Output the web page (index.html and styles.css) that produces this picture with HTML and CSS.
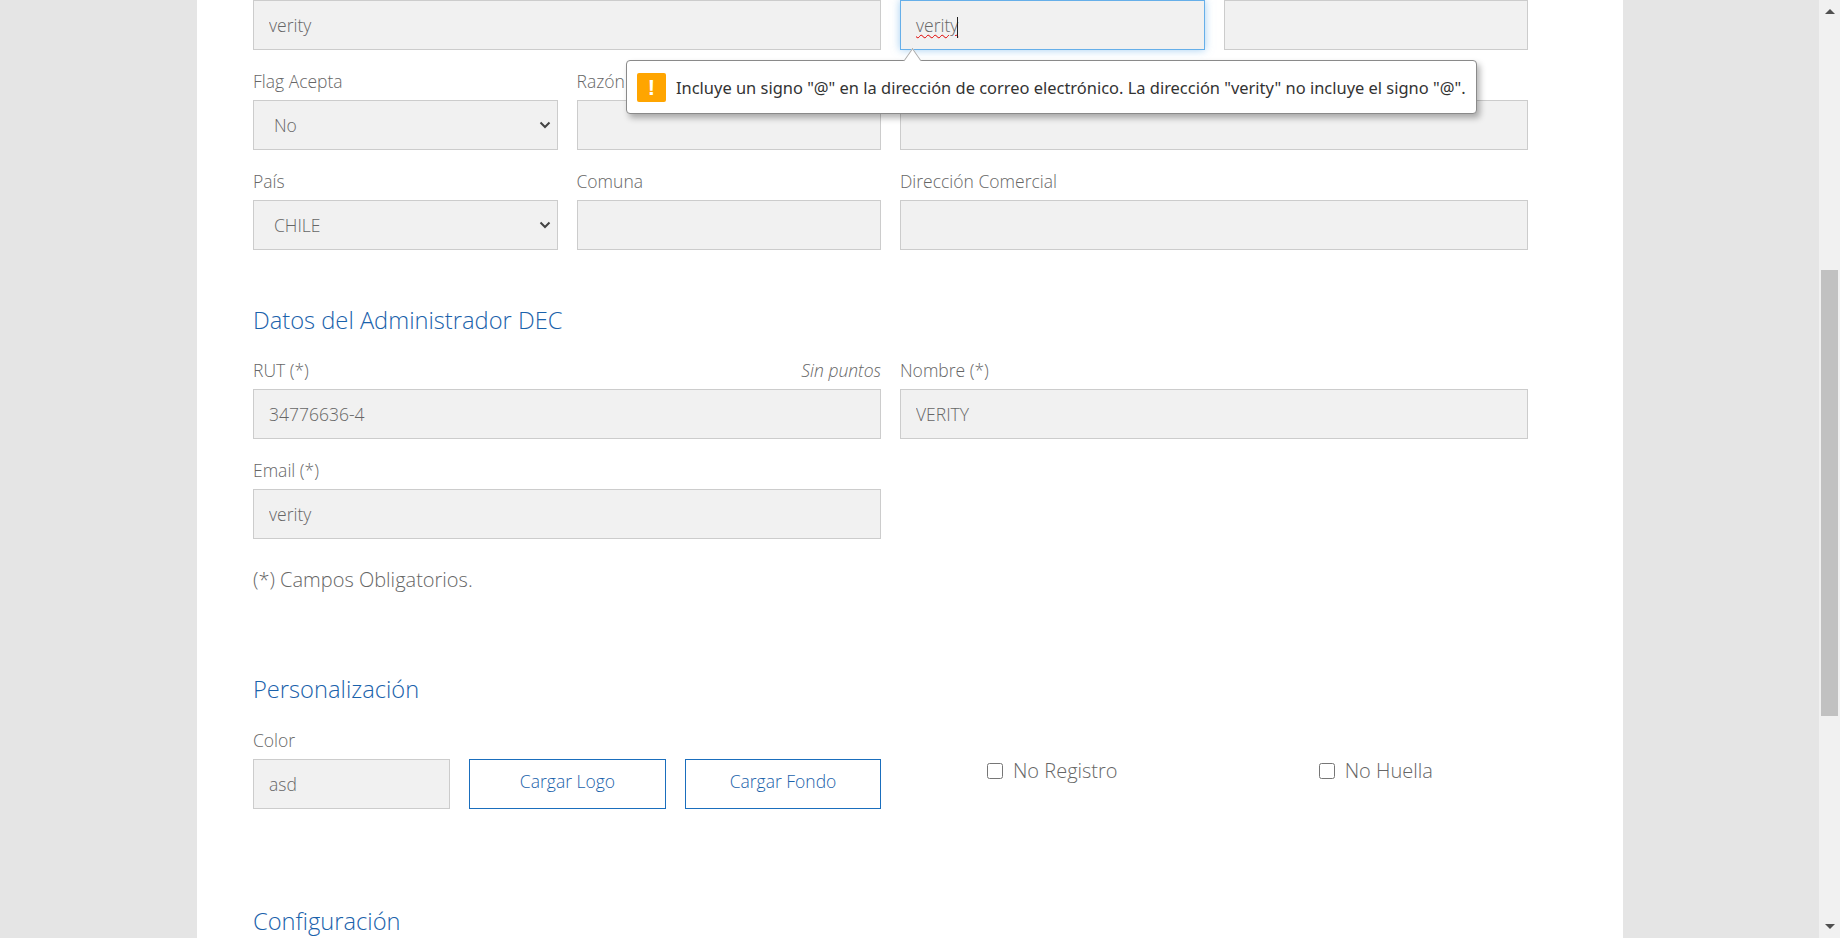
FILE: index.html
```html
<!DOCTYPE html>
<html lang="es">
<head>
    <meta charset="UTF-8">
    <meta name="viewport" content="width=device-width, initial-scale=1.0">
    <title>Datos de la empresa</title>
    <link rel="stylesheet" href="styles.css">
</head>
<body>
    <main class="sheet">
        <form class="form">
            <div class="row row-top">
                <div class="col-2"><input class="field" type="text" value="verity"></div>
                <div class="col-1">
                    <div class="field field-focus" role="textbox"><span class="misspelt">verity</span><span class="caret"></span></div>
                </div>
                <div class="col-1"><input class="field" type="text"></div>
            </div>

            <div class="row">
                <div class="col-1">
                    <label class="label">Flag Acepta</label>
                    <select class="field field-select"><option>No</option></select>
                </div>
                <div class="col-1">
                    <label class="label">Razón</label>
                    <input class="field" type="text">
                </div>
                <div class="col-2">
                    <label class="label"></label>
                    <input class="field" type="text">
                </div>
            </div>

            <div class="row">
                <div class="col-1">
                    <label class="label">País</label>
                    <select class="field field-select"><option>CHILE</option></select>
                </div>
                <div class="col-1">
                    <label class="label">Comuna</label>
                    <input class="field" type="text">
                </div>
                <div class="col-2">
                    <label class="label">Dirección Comercial</label>
                    <input class="field" type="text">
                </div>
            </div>

            <h2 class="section-title title-admin">Datos del Administrador DEC</h2>

            <div class="row">
                <div class="col-2">
                    <div class="label-line">
                        <label class="label">RUT (*)</label>
                        <em class="hint">Sin puntos</em>
                    </div>
                    <input class="field" type="text" value="34776636-4">
                </div>
                <div class="col-2">
                    <label class="label">Nombre (*)</label>
                    <input class="field" type="text" value="VERITY">
                </div>
            </div>

            <div class="row">
                <div class="col-2">
                    <label class="label">Email (*)</label>
                    <input class="field" type="text" value="verity">
                </div>
            </div>

            <p class="required-note">(*) Campos Obligatorios.</p>

            <h2 class="section-title title-custom">Personalización</h2>

            <div class="row">
                <div class="col-2 color-group">
                    <div>
                        <label class="label">Color</label>
                        <input class="field" type="text" value="asd">
                    </div>
                    <button class="upload-btn" type="button">Cargar Logo</button>
                    <button class="upload-btn" type="button">Cargar Fondo</button>
                </div>
                <div class="col-1 check-cell">
                    <label class="check"><input type="checkbox">No Registro</label>
                </div>
                <div class="col-1 check-cell">
                    <label class="check"><input type="checkbox">No Huella</label>
                </div>
            </div>

            <h2 class="section-title title-config">Configuración</h2>
        </form>

        <div class="bubble" role="alert">
            <span class="bubble-arrow"></span>
            <span class="bubble-icon">!</span>
            <span>Incluye un signo "@" en la dirección de correo electrónico. La dirección "verity" no incluye el signo "@".</span>
        </div>
    </main>

    <div class="scrollbar" aria-hidden="true">
        <span class="scroll-arrow arrow-up"></span>
        <div class="scroll-track"><div class="scroll-thumb"></div></div>
        <span class="scroll-arrow arrow-down"></span>
    </div>
</body>
</html>
```

FILE: styles.css
```css
* {
    box-sizing: border-box;
}

html, body {
    height: 100%;
}

body {
    margin: 0;
    display: flex;
    overflow: hidden;
    background-color: #e5e5e5;
    font-family: "Open Sans", sans-serif;
    font-weight: 300;
    font-size: 17.5px;
    color: #666;
}

.sheet {
    position: relative;
    flex: none;
    width: 1426px;
    height: 938px;
    margin-left: 197px;
    margin-right: 196px;
    padding: 0 95px 0 56px;
    background-color: #fff;
    overflow: hidden;
}

.row {
    display: grid;
    grid-template-columns: repeat(4, 1fr);
    column-gap: 19px;
    margin-top: 20px;
}

.row-top {
    margin-top: 0;
}

.col-1 {
    grid-column: span 1;
}

.col-2 {
    grid-column: span 2;
}

.label, .hint {
    display: block;
    height: 30px;
    line-height: 22px;
    font-size: 17.5px;
}

.label-line {
    display: flex;
    justify-content: space-between;
}

.field {
    display: block;
    width: 100%;
    height: 50px;
    padding: 0 15px;
    background-color: #f1f1f1;
    border: 1px solid #ccc;
    border-radius: 0;
    font-family: inherit;
    font-weight: 300;
    font-size: 17.5px;
    line-height: 48px;
    color: #666;
    outline: none;
}

.field-select {
    appearance: none;
    padding: 0 24px 0 20px;
    background-image: url("data:image/svg+xml,%3Csvg xmlns='http://www.w3.org/2000/svg' width='12' height='8' viewBox='0 0 12 8'%3E%3Cpath d='M1.5 1.5 6 6l4.5-4.5' fill='none' stroke='%23444' stroke-width='2'/%3E%3C/svg%3E");
    background-repeat: no-repeat;
    background-position: right 6px center;
}

.field-focus {
    border-color: #66afe9;
    box-shadow: 0 0 8px rgba(102, 175, 233, 0.6);
}

.misspelt {
    text-decoration: underline wavy #e00000 1px;
    text-underline-offset: 2px;
}

.caret {
    display: inline-block;
    width: 1px;
    height: 21px;
    margin-left: -1px;
    vertical-align: middle;
    background-color: #222;
}

.section-title {
    margin: 0;
    font-weight: 300;
    font-size: 23.7px;
    line-height: 34px;
    color: #1a62ab;
}

.title-admin {
    margin-top: 53px;
    margin-bottom: 22px;
}

.title-custom {
    margin-top: 77px;
    margin-bottom: 23px;
}

.title-config {
    margin-top: 95px;
}

.required-note {
    margin: 26px 0 0;
    font-size: 20px;
    line-height: 30px;
}

.color-group {
    display: grid;
    grid-template-columns: 197px 197px 196px;
    column-gap: 19px;
    align-items: end;
}

.upload-btn {
    height: 50px;
    padding: 0 0 7px;
    background-color: #fff;
    border: 1.5px solid #1a6ebd;
    font-family: inherit;
    font-weight: 300;
    font-size: 17.5px;
    color: #1a62ab;
}

.check-cell {
    display: flex;
    justify-content: center;
    align-items: flex-start;
    padding-top: 30px;
}

.check {
    display: flex;
    align-items: center;
    gap: 10px;
    font-size: 20px;
    line-height: 24px;
}

.check input {
    width: 16px;
    height: 16px;
    margin: 0;
}

/* validation popup of the browser */
.bubble {
    position: absolute;
    left: 429px;
    top: 60px;
    display: flex;
    align-items: center;
    gap: 10px;
    width: 851px;
    height: 54px;
    padding: 0 10px 0 10px;
    background-color: #fff;
    border: 1px solid #8a8a8a;
    border-radius: 4px;
    box-shadow: 3px 4px 6px rgba(0, 0, 0, 0.3);
    font-family: "Noto Sans", sans-serif;
    font-weight: 400;
    font-size: 16.45px;
    color: #333;
    white-space: nowrap;
}

.bubble-arrow {
    position: absolute;
    left: 278px;
    top: -8px;
    width: 15px;
    height: 15px;
    background-color: #fff;
    border-left: 1px solid #aaa;
    border-top: 1px solid #aaa;
    transform: rotate(45deg) skew(10deg, 10deg);
}

.bubble-icon {
    flex: none;
    width: 29px;
    height: 29px;
    background-color: #ffa500;
    border-radius: 2px;
    color: #fff;
    font-family: "Liberation Sans", sans-serif;
    font-weight: 700;
    font-size: 22px;
    line-height: 29px;
    text-align: center;
}

.scrollbar {
    flex: none;
    display: flex;
    flex-direction: column;
    align-items: center;
    width: 21px;
    height: 938px;
    background-color: #f1f1f1;
}

.scroll-track {
    flex: 1;
    width: 100%;
    padding: 256px 2px 0;
}

.scroll-thumb {
    height: 446px;
    background-color: #c1c1c1;
}

.scroll-arrow {
    flex: none;
    width: 0;
    height: 0;
    border-left: 5px solid transparent;
    border-right: 5px solid transparent;
}

.arrow-up {
    margin-top: 9px;
    border-bottom: 5px solid #505050;
}

.arrow-down {
    margin-bottom: 9px;
    border-top: 5px solid #505050;
}
```
